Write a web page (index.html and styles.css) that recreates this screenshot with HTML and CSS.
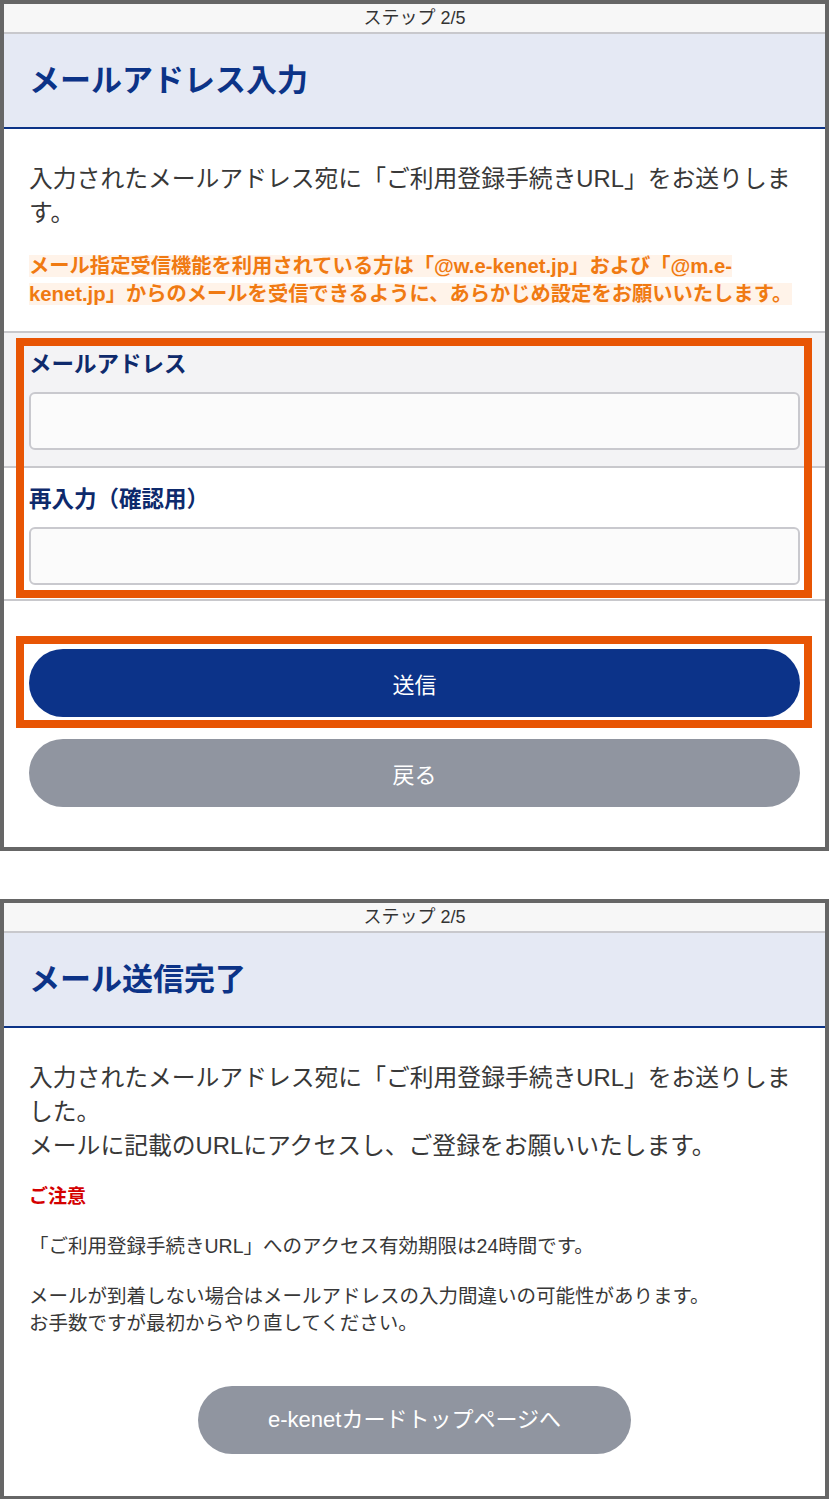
FILE: index.html
```html
<!DOCTYPE html>
<html lang="ja">
<head>
    <meta charset="UTF-8">
    <meta name="viewport" content="width=device-width, initial-scale=1.0">
    <title>メールアドレス入力</title>
    <link rel="stylesheet" href="styles.css">
</head>
<body>
    <!-- 画面1: メールアドレス入力 -->
    <div class="panel">
        <div class="step">ステップ 2/5</div>
        <h1 class="page-title">メールアドレス入力</h1>

        <div class="content">
            <p class="lead">入力されたメールアドレス宛に「ご利用登録手続きURL」をお送りします。</p>
            <p class="notice"><span>メール指定受信機能を利用されている方は「@w.e-kenet.jp」および「@m.e-kenet.jp」からのメールを受信できるように、あらかじめ設定をお願いいたします。</span></p>
        </div>

        <form class="mail-form marked">
            <div class="field field-gray">
                <label for="mail">メールアドレス</label>
                <input type="email" id="mail">
            </div>
            <div class="field">
                <label for="mail2">再入力（確認用）</label>
                <input type="email" id="mail2">
            </div>
        </form>

        <div class="actions">
            <div class="send-wrap marked">
                <button type="button" class="btn btn-primary">送信</button>
            </div>
            <button type="button" class="btn btn-gray">戻る</button>
        </div>
    </div>

    <!-- 画面2: メール送信完了 -->
    <div class="panel panel-done">
        <div class="step">ステップ 2/5</div>
        <h1 class="page-title">メール送信完了</h1>

        <div class="content">
            <p class="lead">入力されたメールアドレス宛に「ご利用登録手続きURL」をお送りしました。<br>メールに記載のURLにアクセスし、ご登録をお願いいたします。</p>
            <h2 class="caution">ご注意</h2>
            <p class="small">「ご利用登録手続きURL」へのアクセス有効期限は24時間です。</p>
            <p class="small">メールが到着しない場合はメールアドレスの入力間違いの可能性があります。<br>お手数ですが最初からやり直してください。</p>
            <div class="center">
                <a href="#" class="btn btn-gray btn-top">e-kenetカードトップページへ</a>
            </div>
        </div>
    </div>
</body>
</html>
```

FILE: styles.css
```css
body {
    margin: 0;
    background-color: #fff;
    font-family: "Liberation Sans", "Noto Sans CJK JP", sans-serif;
    color: #333;
}

.panel {
    width: 829px;
    box-sizing: border-box;
    border: 4px solid #666;
    background-color: #fff;
}

.panel-done {
    margin-top: 48px;
}

.step {
    height: 28px;
    line-height: 28px;
    text-align: center;
    font-size: 18px;
    color: #333;
    background-color: #f7f7f7;
    border-bottom: 2px solid #c8c8cc;
}

.page-title {
    margin: 0;
    height: 93px;
    line-height: 93px;
    padding-left: 25px;
    font-size: 31px;
    font-weight: bold;
    color: #0c3387;
    background-color: #e5e9f4;
    border-bottom: 2px solid #0c3387;
}

.content {
    padding: 33px 25px 0;
}

.lead {
    margin: 0;
    font-size: 23.8px;
    line-height: 34px;
    color: #383838;
}

.notice {
    margin: 22px 0 23px;
    font-size: 20.3px;
    line-height: 28px;
    font-weight: bold;
    color: #f07a12;
}

.notice span {
    background-color: #fff3e9;
}

/* フォーム */
.mail-form {
    margin: 0;
    border-top: 2px solid #c8c8cc;
    border-bottom: 2px solid #c8c8cc;
}

.field {
    padding: 17px 25px 16px;
}

.field + .field {
    border-top: 2px solid #c8c8cc;
    padding-bottom: 14px;
}

.field-gray {
    background-color: #f3f3f5;
}

.field label {
    display: block;
    margin-bottom: 12px;
    font-size: 22.5px;
    line-height: 30px;
    font-weight: bold;
    color: #0e2a6c;
}

.field input {
    display: block;
    width: 100%;
    height: 58px;
    box-sizing: border-box;
    border: 2px solid #c9c9ce;
    border-radius: 6px;
    background-color: #fbfbfb;
    outline: none;
}

/* 注目枠 */
.marked {
    position: relative;
}

.marked::after {
    content: "";
    position: absolute;
    border: 8px solid #e85504;
    pointer-events: none;
}

.mail-form.marked::after {
    top: 5px;
    left: 12px;
    right: 13px;
    bottom: 1px;
}

.send-wrap.marked::after {
    top: -13px;
    left: -13px;
    right: -12px;
    bottom: -11px;
}

/* ボタン */
.actions {
    display: flex;
    flex-direction: column;
    gap: 22px;
    padding: 48px 25px 40px;
}

.btn {
    display: block;
    width: 100%;
    height: 68px;
    border: none;
    border-radius: 34px;
    font-family: "Liberation Sans", "Noto Sans CJK JP", sans-serif;
    font-size: 22px;
    color: #fff;
    text-align: center;
    text-decoration: none;
    cursor: pointer;
}

.btn-primary {
    background-color: #0c3389;
}

.btn-gray {
    background-color: #9095a0;
}

/* 完了画面 */
.caution {
    margin: 20px 0 0;
    font-size: 19px;
    line-height: 27px;
    font-weight: bold;
    color: #d40000;
}

.small {
    margin: 23px 0 0;
    font-size: 19.5px;
    line-height: 27px;
    color: #383838;
}

.center {
    display: flex;
    justify-content: center;
    margin-top: 49px;
    padding-bottom: 42px;
}

.btn-top {
    width: 433px;
    line-height: 68px;
}
```
